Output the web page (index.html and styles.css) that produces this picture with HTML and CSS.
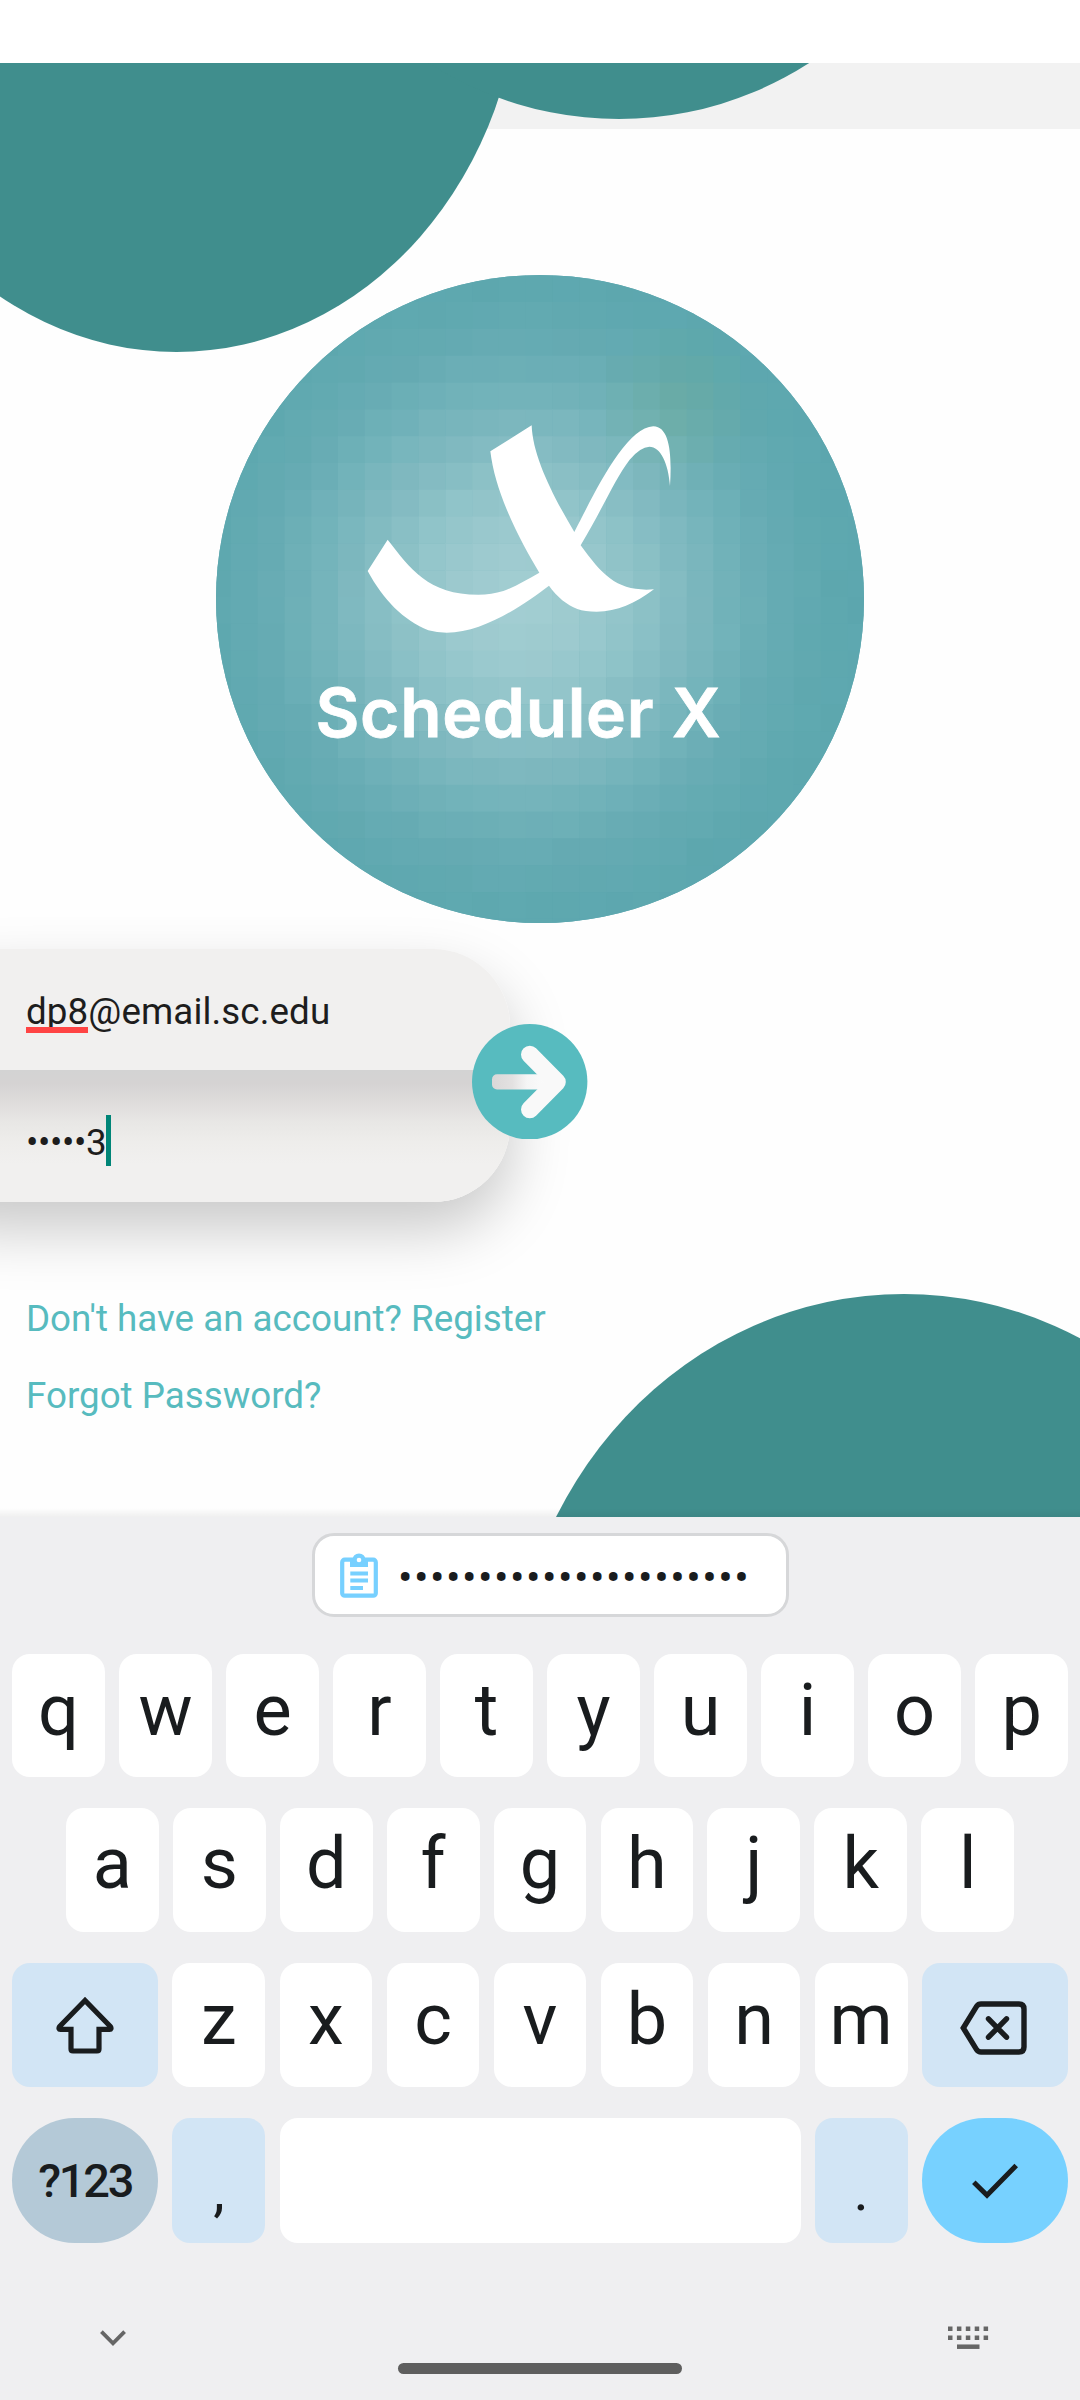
FILE: index.html
```html
<!DOCTYPE html>
<html lang="en">
<head>
<meta charset="utf-8">
<title>Scheduler X</title>
<link rel="stylesheet" href="styles.css">
</head>
<body>
<main class="app">
  <div class="status-bar"></div>
  <section class="screen">
    <div class="blob blob-left"></div>
    <div class="blob blob-top"></div>
    <div class="blob blob-bottom"></div>
    <header class="header-strip"></header>
    <svg class="logo" viewBox="0 0 648 648" role="img" aria-label="Scheduler X">
      <defs><clipPath id="disc"><circle cx="324" cy="324" r="324"/></clipPath></defs>
      <g clip-path="url(#disc)">
        <rect width="648" height="648" fill="#5da7af"/>
        <g id="mosaic"></g>
      </g>
      <path class="logo-mark" transform="translate(124 125) scale(.33333)" d="M451 154 L575 76 C578 170 640 290 703 396 C765 275 858 82 940 79 C990 80 996 165 990 258 C985 190 962 140 928 140 Q901 141 869 179 C825 236 790 322 722 436 C790 530 835 576 942 568 C885 610 832 635 770 635 Q735 635 712 627 C680 614 652 592 627 557 C550 615 430 698 320 698 Q290 698 265 691 C190 660 130 600 83 513 L143 419 C210 505 265 584 415 584 Q455 584 490 573 C525 561 562 538 598 518 C535 415 465 275 451 154Z"/>
      <text class="logo-name" x="99.500" y="461.500" textLength="405">Scheduler X</text>
    </svg>

    <form class="login">
      <div class="fields">
        <div class="field"><span class="typo">dp8</span>@email.sc.edu</div>
        <div class="field field-password"><span class="secret">•••••</span>3<i class="caret"></i></div>
      </div>
      <svg class="submit" viewBox="472 1023.5 115.5 115.5">
        <defs>
          <linearGradient id="arrow" gradientUnits="userSpaceOnUse" x1="492" y1="0" x2="550" y2="0">
            <stop offset="0" stop-color="#dad8d8"/><stop offset=".35" stop-color="#e3e1e1"/><stop offset=".6" stop-color="#f5f5f5"/><stop offset="1" stop-color="#fcfcfc"/>
          </linearGradient>
        </defs>
        <circle cx="529.7" cy="1081.3" r="57.7" fill="#57bbbf"/>
        <rect x="492" y="1073.7" width="62" height="15.3" rx="5" fill="url(#arrow)"/>
        <path d="M529.8 1054 L557 1081.5 L529.8 1109" fill="none" stroke="#f9f9f9" stroke-width="17.6" stroke-linecap="round" stroke-linejoin="round"/>
      </svg>
    </form>

    <nav class="links">
      <a>Don't have an account? Register</a>
      <a>Forgot Password?</a>
    </nav>
  </section>

  <section class="keyboard">
    <div class="suggestions">
      <div class="clip">
        <svg class="clip-icon" viewBox="0 0 38 45" fill="none" stroke="#77d0ff" stroke-width="4.2">
          <rect x="2.2" y="6.7" width="33.6" height="36" rx="2.5"/>
          <path d="M10 7h18v7H10z" fill="#77d0ff" stroke="none"/>
          <circle cx="19" cy="7" r="6.6" fill="#77d0ff" stroke="none"/>
          <circle cx="19" cy="7" r="2.3" fill="#fff" stroke="none"/>
          <path d="M10.300 20.500H28M10.300 27.500H28M10.300 35H23"/>
        </svg>
        <span class="clip-text">••••••••••••••••••••••</span>
      </div>
    </div>
    <div class="row row-top">
      <b class="key">q</b><b class="key">w</b><b class="key">e</b><b class="key">r</b><b class="key">t</b><b class="key">y</b><b class="key">u</b><b class="key">i</b><b class="key">o</b><b class="key">p</b>
    </div>
    <div class="row row-home">
      <b class="key">a</b><b class="key">s</b><b class="key">d</b><b class="key">f</b><b class="key">g</b><b class="key">h</b><b class="key">j</b><b class="key">k</b><b class="key">l</b>
    </div>
    <div class="row">
      <b class="key key-side key-blue">
        <svg width="60" height="60" viewBox="0 0 60 60" fill="none" stroke="#191c1e" stroke-width="5.200" stroke-linejoin="round"><path d="M30 5.500 L4.600 31.500 Q3 34.300 5.500 34.300 H16 V54 Q16 56 18 56 H42 Q44 56 44 54 V34.300 H54.500 Q57 34.300 55.400 31.500 Z" stroke-linejoin="miter"/></svg>
      </b>
      <b class="key">z</b><b class="key">x</b><b class="key">c</b><b class="key">v</b><b class="key">b</b><b class="key">n</b><b class="key">m</b>
      <b class="key key-side key-blue key-back">
        <svg width="68" height="54" viewBox="0 0 68 54" fill="none" stroke="#191c1e" stroke-width="5.400"><path d="M3.300 27 L16.700 5.200 Q18.200 3 21 3 H59 Q64 3 64 8 V46 Q64 51 59 51 H21 Q18.200 51 16.700 48.800 Z"/><path d="M28.500 17.800 L46.500 36.200 M46.500 17.800 L28.500 36.200" stroke-linecap="round"/></svg>
      </b>
    </div>
    <div class="row row-last">
      <b class="key key-side key-round key-mode">?123</b>
      <b class="key key-blue">,</b>
      <b class="key key-space"></b>
      <b class="key key-blue">.</b>
      <b class="key key-side key-round key-enter">
        <svg width="46" height="36" viewBox="0 0 46 36" fill="none" stroke="#191c1e" stroke-width="5"><path d="M1.800 19.300 L15 32.300 L44.200 2.500"/></svg>
      </b>
    </div>
    <footer class="nav-bar">
      <svg class="nav-down" width="26" height="17" viewBox="0 0 26 17" fill="none" stroke="#666" stroke-width="3.800"><path d="M1.400 1.700 L13 13.300 L24.600 1.700"/></svg>
      <div class="handle"></div>
      <svg class="nav-kbd" width="41" height="24" viewBox="0 0 41 24" fill="none" stroke="#666" stroke-width="4.500"><path d="M0 2.700H41M0 11.700H41" stroke-dasharray="4.500 4.400"/><path d="M9 20.700H31.500"/></svg>
    </footer>
  </section>
</main>
<script src="mosaic.js"></script>
</body>
</html>
```
FILE: styles.css
```css
* { box-sizing: border-box; }
body { margin: 0; background: #fff; font-family: Roboto, sans-serif; }
.app { width: 1080px; height: 2400px; overflow: hidden; display: flex; flex-direction: column; }
.status-bar { height: 63px; flex: none; background: #fff; }

.screen { position: relative; height: 1454px; flex: none; overflow: hidden; background: #fefefe; display: flex; flex-direction: column; }
.screen::after { content: ""; position: absolute; left: 0; right: 0; bottom: 0; height: 9px; background: linear-gradient(rgba(0,0,0,0), rgba(0,0,0,.06)); }
.header-strip { height: 66px; flex: none; background: #f2f2f2; }
.blob { position: absolute; border-radius: 50%; background: #408e8d; }
.blob-left { left: -168px; top: -497px; width: 689px; height: 786px; }
.blob-top { left: 268px; top: -646px; width: 702px; height: 702px; }
.blob-bottom { left: 510px; top: 1231px; width: 788px; height: 840px; }

.logo { position: relative; flex: none; width: 648px; height: 648px; margin: 146px auto 0; }
.logo-mark { fill: #fff; }
.logo-name { fill: #fff; stroke: #fff; stroke-width: .8px; font: 600 67.500px Inter, sans-serif; }

.login { position: relative; flex: none; display: flex; align-items: center; margin-top: 26px; height: 253px; }
.login::before { content: ""; position: absolute; left: -90px; top: 0; width: 600px; height: 253px; border-radius: 77px; box-shadow: 0 28px 60px rgba(0,0,0,.21); }
.fields { position: relative; width: 510px; height: 253px; border-radius: 0 77px 77px 0; overflow: hidden; background: #f1f0ef; }
.field { height: 121px; padding: 4px 0 0 26px; display: flex; align-items: center; font-size: 36.750px; letter-spacing: .1px; color: #1d1d1d; white-space: pre; }
.field-password { height: 132px; padding-top: 12px; background: linear-gradient(#d3d3d3 0, #d5d3d3 13px, #dfdddc 34px, #e8e7e5 52px, #eeedeb 72px, #f1f0ef 94px); }
.secret { letter-spacing: -.4px; }
.typo { position: relative; }
.typo::after { content: ""; position: absolute; left: 0; right: 0; top: 37px; height: 5.500px; background: #ff4444; }
.caret { width: 5px; height: 51px; margin: -3px 0 0 -1px; background: #008577; }
.submit { position: relative; flex: none; width: 115.500px; height: 115.500px; margin: 12px 0 0 -38px; }

.links { position: relative; display: flex; flex-direction: column; padding: 95px 0 0 26px; gap: 34px; font-size: 36.750px; line-height: 43px; color: #57bbbf; }

.keyboard { flex: 1; background: #efeff1; color: #191c1e; display: flex; flex-direction: column; }
.suggestions { height: 137px; flex: none; padding: 16px 0 0 21px; display: flex; justify-content: center; align-items: flex-start; }
.clip { width: 477px; height: 84px; border: 3px solid #d6d7d9; border-radius: 22px; background: #fff; display: flex; align-items: center; padding-left: 25px; }
.clip-icon { width: 38px; height: 45px; flex: none; }
.clip-text { margin: 3px 0 0 20px; font-size: 43px; letter-spacing: 1.500px; white-space: nowrap; }
.row { flex: none; display: flex; gap: 14.100px; height: 124px; padding: 0 12px; margin-bottom: 31px; }
.row-top { height: 123px; }
.row-home { padding: 0 66px; }
.row-last { height: 125px; margin: 0; }
.key { flex: 1 1 0; min-width: 0; border-radius: 18px; background: #fff; font-weight: 400; font-size: 72px; line-height: 113px; text-align: center; }
.row-home .key { line-height: 112px; }
.key-side { flex: 0 0 146.400px; }
.key-space { flex: 0 0 521px; }
.key-side { display: flex; justify-content: center; align-items: center; }
.key-blue { background: #d2e5f5; }
.row-last .key-blue { font-size: 58px; line-height: 144px; }
.row-last .key-enter, .key-mode { line-height: 1; }
.key-back { padding: 5px 2px 0 0; }
.key-round { border-radius: 63px; }
.row-last .key-mode { background: #b4c9d7; font-weight: 500; font-size: 47px; letter-spacing: -2.300px; }
.key-enter { background: #77d1ff; }
.nav-bar { display: flex; justify-content: space-between; align-items: flex-start; padding: 83px 91px 0 100px; }
.nav-down { margin-top: 4px; }
.handle { width: 284px; height: 11px; margin: 37px 0 0 6px; border-radius: 5.500px; background: #5e5e5e; }
```
FILE: mosaic.js
```js
// Tiles behind the logo mark: lighter near the middle, with a faint green patch at the upper right.
(function () {
  var cell = 26.82, cx = 304, cy = 325;
  var stops = [[0, 163, 206, 210], [60, 157, 202, 207], [115, 143, 195, 200], [165, 128, 185, 192], [210, 113, 178, 185], [255, 102, 171, 179], [310, 94, 168, 175], [340, 93, 167, 175]];
  function shade(d) {
    for (var i = 1; i < stops.length; i++) {
      if (d < stops[i][0]) {
        var a = stops[i - 1], b = stops[i], t = (d - a[0]) / (b[0] - a[0]);
        return [1, 2, 3].map(function (k) { return a[k] + (b[k] - a[k]) * t; });
      }
    }
    return stops[stops.length - 1].slice(1);
  }
  var out = '';
  for (var r = 0; r < 25; r++) {
    for (var c = 0; c < 26; c++) {
      var x = -12.1 + c * cell, y = 0.2 + r * cell;
      var mx = x + cell / 2, my = y + cell / 2;
      var col = shade(Math.hypot(mx - cx, my - cy));
      var green = Math.max(0, 1 - Math.hypot(mx - 462, my - 130) / 85);
      var n = ((r * 7 + c * 13 + r * c * 3) % 5 - 2) * 0.3;
      col = [col[0] + green * 3 + n, col[1] + n, col[2] - green * 14 + n].map(Math.round);
      out += '<rect x="' + x.toFixed(1) + '" y="' + y.toFixed(1) + '" width="27.2" height="27.2" fill="rgb(' + col + ')"/>';
    }
  }
  document.getElementById('mosaic').innerHTML = out;
})();
```
